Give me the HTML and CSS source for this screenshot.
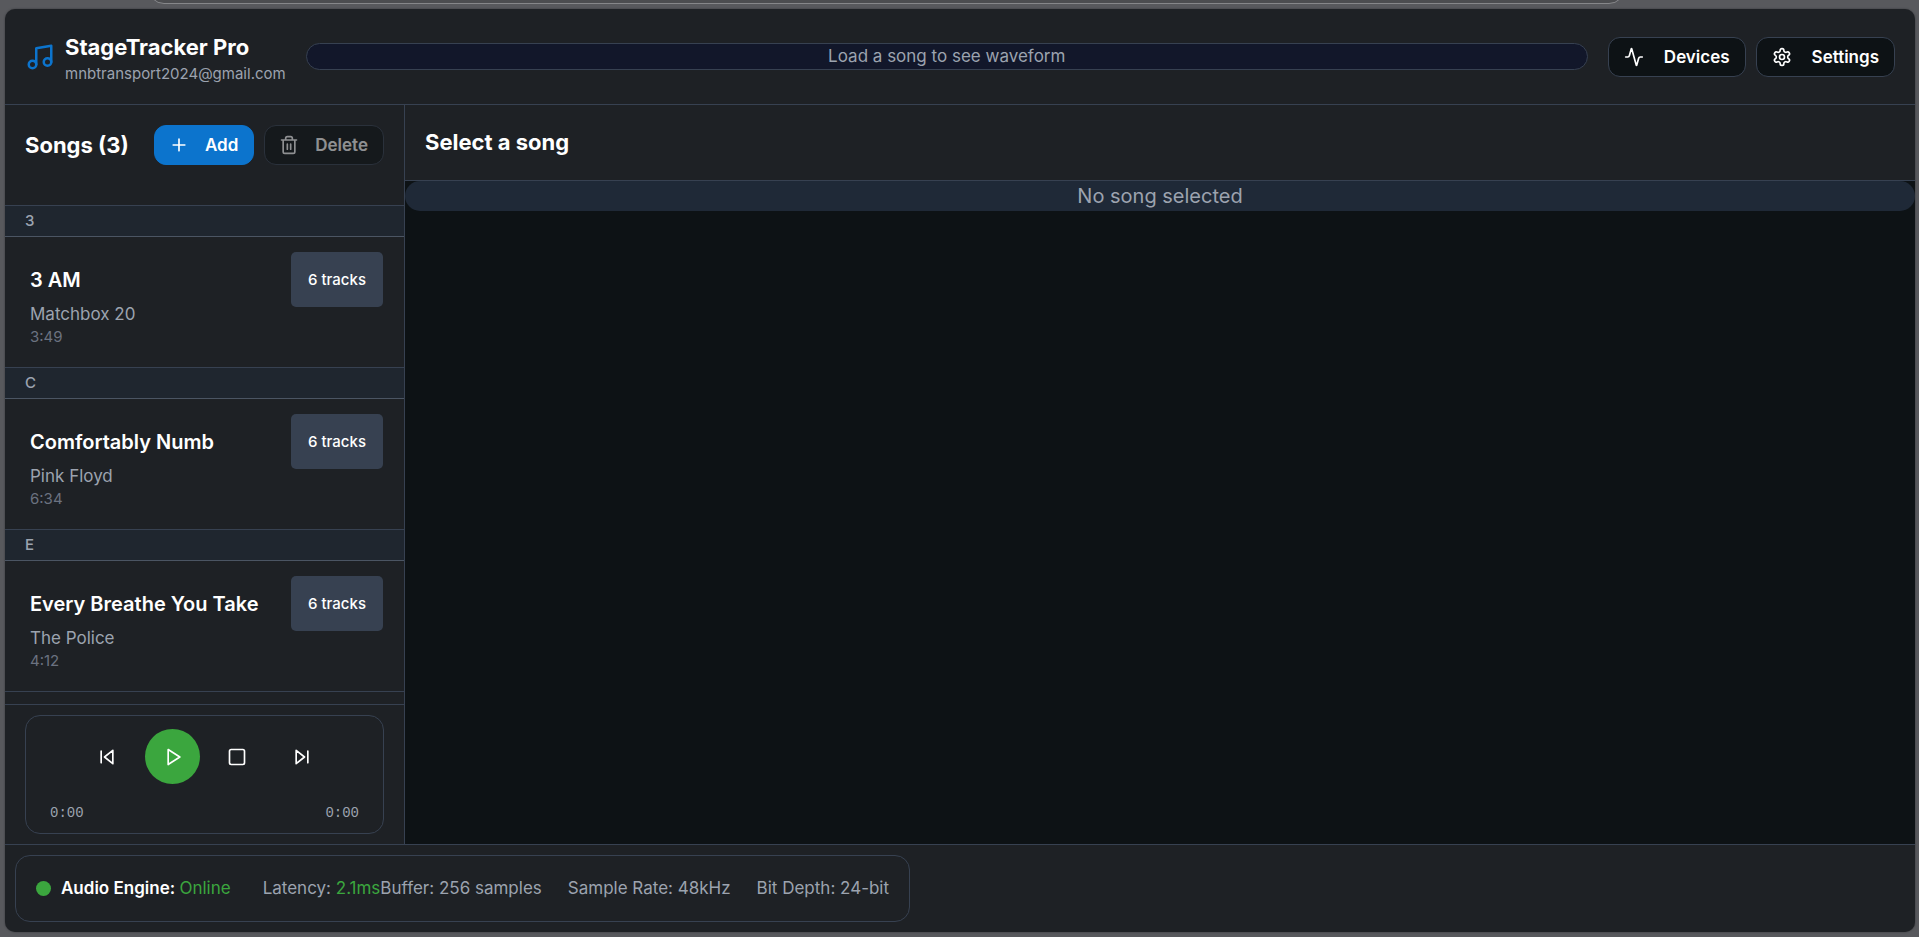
FILE: index.html
```html
<!DOCTYPE html>
<html lang="en">
<head>
<meta charset="utf-8">
<title>StageTracker Pro</title>
<link rel="stylesheet" href="styles.css">
</head>
<body>
<div class="backdrop-bar"></div>
<div class="app">
  <header class="topbar">
    <div class="brand">
      <svg class="icon icon-brand" viewBox="0 0 24 24"><path d="M9 18V5l12-2v13"/><circle cx="6" cy="18" r="3"/><circle cx="18" cy="16" r="3"/></svg>
      <div>
        <h1 class="brand-name">StageTracker Pro</h1>
        <p class="brand-mail">mnbtransport2024@gmail.com</p>
      </div>
    </div>
    <div class="waveform">Load a song to see waveform</div>
    <div class="actions">
      <button class="btn btn-wide" type="button"><svg class="icon" viewBox="0 0 24 24"><path d="M22 12h-2.48a2 2 0 0 0-1.93 1.46l-2.35 8.36a.25.25 0 0 1-.48 0L9.24 2.18a.25.25 0 0 0-.48 0l-2.35 8.36A2 2 0 0 1 4.49 12H2"/></svg>Devices</button>
      <button class="btn btn-wide" type="button"><svg class="icon" viewBox="0 0 24 24"><path d="M12.22 2h-.44a2 2 0 0 0-2 2v.18a2 2 0 0 1-1 1.73l-.43.25a2 2 0 0 1-2 0l-.15-.08a2 2 0 0 0-2.73.73l-.22.38a2 2 0 0 0 .73 2.73l.15.1a2 2 0 0 1 1 1.72v.51a2 2 0 0 1-1 1.74l-.15.09a2 2 0 0 0-.73 2.73l.22.38a2 2 0 0 0 2.73.73l.15-.08a2 2 0 0 1 2 0l.43.25a2 2 0 0 1 1 1.73V20a2 2 0 0 0 2 2h.44a2 2 0 0 0 2-2v-.18a2 2 0 0 1 1-1.73l.43-.25a2 2 0 0 1 2 0l.15.08a2 2 0 0 0 2.73-.73l.22-.39a2 2 0 0 0-.73-2.73l-.15-.08a2 2 0 0 1-1-1.74v-.5a2 2 0 0 1 1-1.74l.15-.09a2 2 0 0 0 .73-2.73l-.22-.38a2 2 0 0 0-2.73-.73l-.15.08a2 2 0 0 1-2 0l-.43-.25a2 2 0 0 1-1-1.73V4a2 2 0 0 0-2-2z"/><circle cx="12" cy="12" r="3"/></svg>Settings</button>
    </div>
  </header>

  <div class="body">
    <aside class="sidebar">
      <div class="songs-head">
        <h2 class="heading">Songs (3)</h2>
        <div class="actions">
          <button class="btn btn-primary" type="button"><svg class="icon" viewBox="0 0 24 24"><path d="M5 12h14M12 5v14"/></svg>Add</button>
          <button class="btn" type="button" disabled><svg class="icon" viewBox="0 0 24 24"><path d="M3 6h18M19 6v14a2 2 0 0 1-2 2H7a2 2 0 0 1-2-2V6M8 6V4a2 2 0 0 1 2-2h4a2 2 0 0 1 2 2v2M10 11v6M14 11v6"/></svg>Delete</button>
        </div>
      </div>
      <div class="songs">
        <h3 class="letter">3</h3>
        <article class="song">
          <div class="song-info"><h4 class="song-title">3 AM</h4><p class="song-artist">Matchbox 20</p><p class="song-time">3:49</p></div>
          <span class="badge">6 tracks</span>
        </article>
        <h3 class="letter">C</h3>
        <article class="song">
          <div class="song-info"><h4 class="song-title">Comfortably Numb</h4><p class="song-artist">Pink Floyd</p><p class="song-time">6:34</p></div>
          <span class="badge">6 tracks</span>
        </article>
        <h3 class="letter">E</h3>
        <article class="song">
          <div class="song-info"><h4 class="song-title">Every Breathe You Take</h4><p class="song-artist">The Police</p><p class="song-time">4:12</p></div>
          <span class="badge">6 tracks</span>
        </article>
      </div>
      <div class="transport">
        <div class="player">
          <div class="player-buttons">
            <button class="round" type="button" aria-label="Previous"><svg class="icon" viewBox="0 0 24 24"><path d="M19 20L9 12l10-8v16zM5 19V5"/></svg></button>
            <button class="round round-play" type="button" aria-label="Play"><svg class="icon icon-play" viewBox="0 0 24 24"><path d="M5 3l14 9-14 9V3z"/></svg></button>
            <button class="round" type="button" aria-label="Stop"><svg class="icon" viewBox="0 0 24 24"><rect x="3" y="3" width="18" height="18" rx="2"/></svg></button>
            <button class="round" type="button" aria-label="Next"><svg class="icon" viewBox="0 0 24 24"><path d="M5 4l10 8-10 8V4zM19 5v14"/></svg></button>
          </div>
          <div class="player-times"><span>0:00</span><span>0:00</span></div>
        </div>
      </div>
    </aside>
    <main class="main">
      <div class="main-head"><h2 class="heading">Select a song</h2></div>
      <div class="empty">No song selected</div>
    </main>
  </div>

  <footer class="footer">
    <div class="status">
      <div class="engine"><span class="dot"></span><span class="engine-label">Audio Engine: <span class="ok">Online</span></span></div>
      <div class="stats">
        <div>Latency: <span class="ok">2.1ms</span></div>
        <div>Buffer: 256 samples</div>
        <div class="stat-gap">Sample Rate: 48kHz</div>
        <div class="stat-gap">Bit Depth: 24-bit</div>
      </div>
    </div>
  </footer>
</div>
</body>
</html>
```
FILE: styles.css
```css
* { box-sizing: border-box; margin: 0; padding: 0; }

:root {
  --panel: #1e2125;
  --deep: #0d1215;
  --line: #374151;
  --blue: #0c74cd;
  --green: #3ba63e;
  --muted: #9ca3af;
}

body {
  height: 100vh;
  padding: 9px 4px 5px 5px;
  background: #58595d;
  color: #fff;
  font-family: Inter, "Liberation Sans", sans-serif;
  font-size: 17px;
  line-height: 26px;
  overflow: hidden;
}

h1, h2, h3, h4 { font-weight: 600; }
button { font: inherit; color: inherit; }

.backdrop-bar {
  position: absolute;
  top: -37px;
  left: 148px;
  right: 294px;
  height: 41px;
  border: 1px solid #86878a;
  border-radius: 16px;
  background: #4c4d50;
}

.app {
  display: flex;
  flex-direction: column;
  height: 100%;
  background: var(--panel);
  border-radius: 10px;
  box-shadow: 0 0 2px #333438;
  overflow: hidden;
}

.icon {
  width: 20px;
  height: 20px;
  flex: none;
  fill: none;
  stroke: currentColor;
  stroke-width: 2;
  stroke-linecap: round;
  stroke-linejoin: round;
}
.icon-brand { width: 30px; height: 30px; color: var(--blue); }
.icon-play { margin-left: 3px; }

.topbar {
  display: flex;
  align-items: center;
  gap: 20px;
  height: 96px;
  padding: 0 20px;
  border-bottom: 1px solid var(--line);
}
.brand { display: flex; align-items: center; gap: 10px; }
.brand-name { font-size: 22px; font-weight: 700; line-height: 34px; }
.brand-mail { font-size: 15px; line-height: 20px; color: var(--muted); }

.waveform {
  flex: 1;
  border: 1px solid var(--line);
  border-radius: 14px;
  background: #12172a;
  color: var(--muted);
  line-height: 25px;
  text-align: center;
}

.actions { display: flex; gap: 10px; }
.btn {
  display: flex;
  align-items: center;
  gap: 16px;
  height: 40px;
  padding: 0 15px 0 14px;
  border: 1px solid var(--line);
  border-radius: 12px;
  background: var(--deep);
  font-weight: 600;
}
.btn-wide { gap: 20px; padding: 0 15px; }
.btn-primary { background: var(--blue); border-color: var(--blue); }
.btn:disabled { opacity: .5; }

.body { display: flex; flex: 1; min-height: 0; }

.sidebar {
  display: flex;
  flex-direction: column;
  width: 400px;
  border-right: 1px solid var(--line);
}
.songs-head {
  display: flex;
  justify-content: space-between;
  align-items: center;
  padding: 20px 20px 40px;
  border-bottom: 1px solid var(--line);
}
.heading { font-size: 22px; font-weight: 700; line-height: 35px; }

.songs { flex: 1; min-height: 0; overflow: hidden; }
.letter {
  padding: 5px 20px;
  border-bottom: 1px solid #4b5563;
  background: #1f262f;
  color: var(--muted);
  font-size: 15px;
  font-weight: 500;
  line-height: 20px;
}
.song {
  display: flex;
  justify-content: space-between;
  align-items: flex-start;
  padding: 15px 21px 20px 25px;
  border-bottom: 1px solid var(--line);
}
.song-info { padding-top: 13px; }
.song-title { font-size: 20px; line-height: 30px; margin-bottom: 7px; }
.song-artist { line-height: 25px; color: var(--muted); }
.song-time { font-size: 15px; line-height: 20px; color: #6b7280; }
.badge {
  padding: 15px 17px;
  border-radius: 5px;
  background: #374151;
  font-size: 15px;
  font-weight: 500;
  line-height: 25px;
}

.transport { padding: 10px 20px; border-top: 1px solid var(--line); }
.player {
  padding: 13px 24px 10px;
  border: 1px solid var(--line);
  border-radius: 15px;
}
.player-buttons { display: flex; justify-content: center; gap: 10px; }
.round {
  display: grid;
  place-items: center;
  width: 55px;
  height: 55px;
  border: 0;
  border-radius: 50%;
  background: none;
}
.round-play { background: var(--green); }
.player-times {
  display: flex;
  justify-content: space-between;
  margin-top: 19px;
  color: var(--muted);
  font-family: "Liberation Mono", monospace;
  font-size: 14px;
  line-height: 20px;
}

.main { flex: 1; background: var(--deep); }
.main-head {
  padding: 20px;
  border-bottom: 1px solid var(--line);
  background: var(--panel);
}
.empty {
  border-radius: 15px;
  background: #1f2937;
  color: var(--muted);
  font-size: 20px;
  line-height: 30px;
  text-align: center;
}

.footer {
  display: flex;
  padding: 10px;
  border-top: 1px solid var(--line);
}
.status {
  display: flex;
  gap: 32px;
  padding: 20px;
  border: 1px solid var(--line);
  border-radius: 15px;
  line-height: 25px;
}
.engine { display: flex; align-items: center; gap: 10px; }
.engine-label { font-weight: 600; }
.engine-label .ok { font-weight: 400; }
.dot { width: 15px; height: 15px; border-radius: 50%; background: var(--green); }
.ok { color: var(--green); }
.stats { display: flex; color: var(--muted); }
.stat-gap { margin-left: 26px; }
```
